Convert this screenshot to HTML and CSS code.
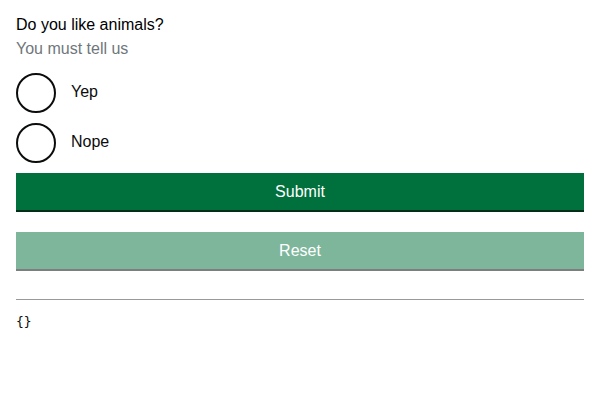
FILE: index.html
```html
<!DOCTYPE html>
<html>
<head>
<meta charset="utf-8">
<link rel="stylesheet" href="styles.css">
</head>
<body>
<form class="form">
  <fieldset class="fieldset">
    <legend class="legend">Do you like animals?</legend>
    <div class="hint">You must tell us</div>
    <div class="radios">
      <label class="radio"><span class="circle"></span><span class="label-text">Yep</span></label>
      <label class="radio"><span class="circle"></span><span class="label-text">Nope</span></label>
    </div>
  </fieldset>
  <button type="button" class="btn btn-submit">Submit</button>
  <button type="button" class="btn btn-reset">Reset</button>
</form>
<hr class="rule">
<pre class="output">{}</pre>
</body>
</html>
```

FILE: styles.css
```css
body {
  margin: 16px;
  font-family: "Liberation Sans", Arial, sans-serif;
  font-size: 16px;
  color: #0b0c0c;
  background: #fff;
}
.form {
  display: flex;
  flex-direction: column;
}
.fieldset {
  border: 0;
  margin: 0;
  padding: 0;
  min-width: 0;
}
.legend {
  padding: 0;
  line-height: 18px;
  color: #000;
}
.hint {
  margin-top: 6px;
  line-height: 18px;
  color: #6f777b;
}
.radios {
  margin-top: 15px;
  display: flex;
  flex-direction: column;
  gap: 10px;
}
.radio {
  display: flex;
  align-items: center;
  height: 40px;
}
.circle {
  box-sizing: border-box;
  width: 40px;
  height: 40px;
  border: 2px solid #0b0c0c;
  border-radius: 50%;
  flex: none;
}
.label-text {
  margin-left: 15px;
  margin-top: -3px;
  color: #0b0c0c;
}
.btn {
  display: block;
  width: 100%;
  height: 37px;
  border: 0;
  padding: 0;
  font-family: "Liberation Sans", Arial, sans-serif;
  font-size: 16px;
  color: #fff;
  background: #00703c;
  box-shadow: 0 2px 0 #002d18;
  cursor: pointer;
}
.btn-submit {
  margin-top: 10px;
}
.btn-reset {
  margin-top: 22px;
  opacity: 0.5;
  box-shadow: 0 2px 0 #000;
}
.rule {
  margin: 30px 0 0;
  border: 0;
  border-top: 1px solid #999;
  height: 0;
}
.output {
  margin: 14px 0 0;
  font-family: "DejaVu Sans Mono", monospace;
  font-size: 13px;
  line-height: 16px;
}
```
